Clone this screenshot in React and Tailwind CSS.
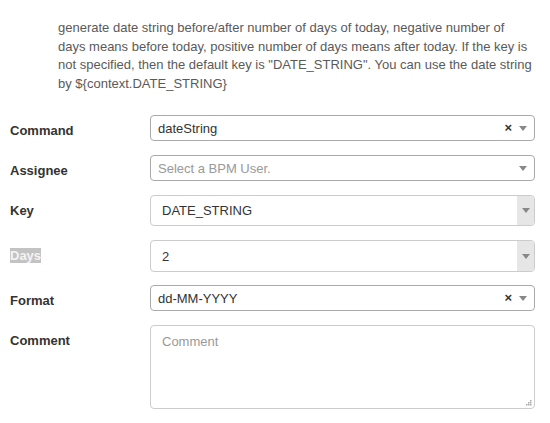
import React from 'react';

const Arrow = () => (
  <svg width="8" height="5" viewBox="0 0 8 5" className="block">
    <path d="M0 0 L8 0 L4 5 Z" fill="#888" />
  </svg>
);

const Clear = () => (
  <span className="text-[13px] font-bold leading-none text-[#333] mr-[7px] -mt-[1px]">×</span>
);

const Select2 = ({ value, placeholder, clearable }) => (
  <div className="flex-1 h-[26px] flex items-center border border-[#aaa] rounded-[4px] bg-white pl-[7px] pr-[7px]">
    <span className={value ? 'flex-1 text-[13px] text-[#333]' : 'flex-1 text-[13px] text-[#999]'}>
      {value || placeholder}
    </span>
    {clearable && <Clear />}
    <Arrow />
  </div>
);

const Combo = ({ value, height }) => (
  <div className={`flex-1 flex items-stretch border border-[#ccc] rounded-[4px] bg-white overflow-hidden ${height}`}>
    <span className="flex-1 flex items-center pl-[11px] text-[13px] text-[#333]">{value}</span>
    <span className="w-[17px] bg-[#e6e6e6] flex items-center justify-center">
      <Arrow />
    </span>
  </div>
);

const Row = ({ label, children, selected }) => (
  <div className="flex items-start">
    <div className="w-[140px] pt-[8px] text-[13px] leading-[16px]">
      <span className={selected ? 'font-bold bg-[#c3c3c3] text-[#f4f4f4]' : 'font-bold text-[#333]'}>
        {label}
      </span>
    </div>
    {children}
  </div>
);

export default function App() {
  return (
    <div className="w-[550px] h-[423px] bg-white font-['Liberation_Sans',Arial,sans-serif]">
      <p className="pt-[19px] pl-[58px] pr-[8px] text-[13px] leading-[18.6px] text-[#5a5a5a] whitespace-nowrap">
        generate date string before/after number of days of today, negative number of<br />
        days means before today, positive number of days means after today. If the key is<br />
        not specified, then the default key is "DATE_STRING". You can use the date string<br />
        by ${'{'}context.DATE_STRING{'}'}
      </p>
      <div className="flex flex-col gap-[14px] pl-[10px] pr-[15px] mt-[22px]">
        <Row label="Command">
          <Select2 value="dateString" clearable />
        </Row>
        <Row label="Assignee">
          <Select2 placeholder="Select a BPM User." />
        </Row>
        <Row label="Key">
          <Combo value="DATE_STRING" height="h-[31px]" />
        </Row>
        <Row label="Days" selected>
          <Combo value="2" height="h-[32px]" />
        </Row>
        <div className="-mt-[1px]">
          <Row label="Format">
            <Select2 value="dd-MM-YYYY" clearable />
          </Row>
        </div>
        <Row label="Comment">
          <div className="relative flex-1 h-[84px] border border-[#ccc] rounded-[4px] bg-white px-[11px] pt-[3px]">
            <span className="text-[13px] text-[#999]">Comment</span>
            <svg width="6" height="6" viewBox="0 0 6 6" className="absolute right-[2px] bottom-[2px]">
              <rect x="4" y="0" width="1.5" height="1.5" fill="#aaa" />
              <rect x="2" y="2" width="1.5" height="1.5" fill="#aaa" />
              <rect x="4" y="2" width="1.5" height="1.5" fill="#aaa" />
              <rect x="0" y="4" width="1.5" height="1.5" fill="#aaa" />
              <rect x="2" y="4" width="1.5" height="1.5" fill="#aaa" />
              <rect x="4" y="4" width="1.5" height="1.5" fill="#aaa" />
            </svg>
          </div>
        </Row>
      </div>
    </div>
  );
}
